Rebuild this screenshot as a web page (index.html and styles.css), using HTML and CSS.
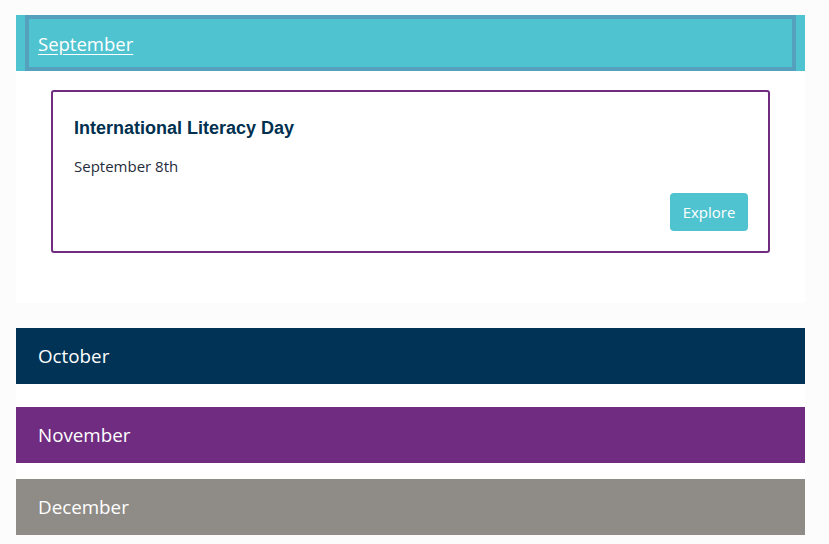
FILE: index.html
```html
<!DOCTYPE html>
<html>
<head>
<meta charset="utf-8">
<link rel="stylesheet" href="styles.css">
</head>
<body>
<div class="page">
  <section class="month month-open">
    <div class="head head-teal">
      <a class="head-link" href="#">September</a>
    </div>
    <div class="panel">
      <div class="card">
        <h3 class="card-title">International Literacy Day</h3>
        <p class="card-date">September 8th</p>
        <div class="card-actions"><a class="btn" href="#">Explore</a></div>
      </div>
    </div>
  </section>
  <div class="rest">
    <section class="month"><div class="head head-navy"><span class="head-text">October</span></div></section>
    <section class="month"><div class="head head-purple"><span class="head-text">November</span></div></section>
    <section class="month"><div class="head head-gray"><span class="head-text">December</span></div></section>
  </div>
</div>
</body>
</html>
```
FILE: styles.css
```css
html, body {
  margin: 0;
  padding: 0;
  background: #fcfcfc;
}
body {
  font-family: "Open Sans", "Noto Sans", sans-serif;
}
.page {
  width: 789px;
  margin-left: 16px;
  padding-top: 15px;
}
.month-open {
  background: #ffffff;
}
.head {
  height: 56px;
  display: flex;
  align-items: center;
  box-sizing: border-box;
}
.head-teal {
  background: #4fc3cf;
  padding: 0 9px;
  align-items: stretch;
}
.head-link {
  flex: 1;
  display: flex;
  align-items: center;
  border: 4px solid #55a0bd;
  padding-left: 9px;
  color: #ffffff;
  font-size: 18.5px;
  text-decoration: underline;
  text-underline-offset: 3px;
}
.head-text {
  padding-left: 22px;
  color: #ffffff;
  font-size: 18.8px;
}
.head-navy { background: #003355; }
.head-purple { background: #6f2c80; }
.head-gray { background: #8f8c87; }
.panel {
  padding: 19px 35px 50px 35px;
}
.card {
  border: 2px solid #6f2c80;
  border-radius: 3px;
  padding: 26px 20px 20px 21px;
  background: #fff;
}
.card-title {
  margin: 0;
  font-family: "Liberation Sans", Arial, sans-serif;
  font-weight: bold;
  font-size: 18px;
  color: #00304f;
  line-height: 20px;
}
.card-date {
  margin: 18px 0 0 0;
  font-size: 15px;
  color: #1f2d3d;
  line-height: 20px;
}
.card-actions {
  display: flex;
  justify-content: flex-end;
  margin-top: 17px;
}
.btn {
  display: inline-flex;
  align-items: center;
  justify-content: center;
  width: 78px;
  height: 38px;
  background: #4fc3cf;
  border-radius: 4px;
  color: #ffffff;
  font-size: 15px;
  text-decoration: none;
}
.rest {
  margin-top: 25px;
  background: #ffffff;
  display: flex;
  flex-direction: column;
  gap: 23px;
}
.rest .month + .month + .month {
  margin-top: -7px;
}
```
